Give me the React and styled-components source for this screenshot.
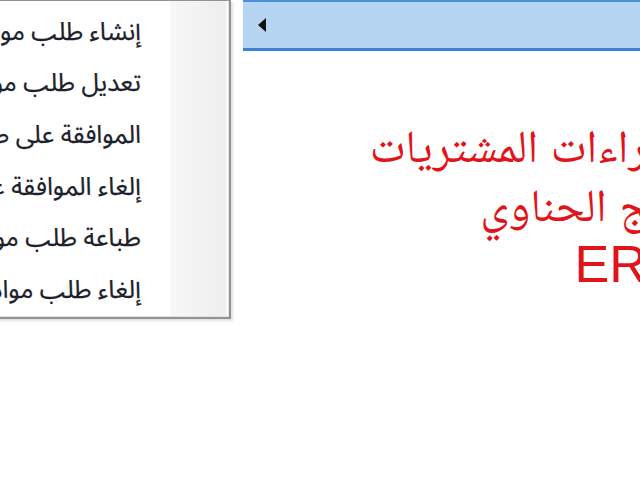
import React from "react";
import styled, { createGlobalStyle } from "styled-components";

const GlobalStyle = createGlobalStyle`
  html, body {
    margin: 0;
    padding: 0;
    background: #ffffff;
    overflow: hidden;
  }
  body {
    width: 640px;
    height: 480px;
  }
`;

const Screen = styled.div`
  display: flex;
  align-items: flex-start;
  width: 640px;
  height: 480px;
  overflow: hidden;
`;

const Menu = styled.ul`
  flex: none;
  direction: rtl;
  list-style: none;
  margin: 0 0 0 -170px;
  padding: 5px 0 1px;
  width: 401px;
  box-sizing: border-box;
  background: linear-gradient(
    to left,
    #ffffff 0,
    #ffffff 2px,
    #eeeeee 3px,
    #f7f7f7 58px,
    #ffffff 60px
  );
  border: 2px solid #939393;
  border-top-width: 1px;
  box-shadow: inset -1px -1px 0 #e2e2e2, 2px 2px 2px rgba(0, 0, 0, 0.12);
`;

const MenuItem = styled.li`
  height: 51.6px;
  display: flex;
  align-items: center;
  padding-right: 88px;
  font-family: "Noto Sans Arabic", "DejaVu Sans", sans-serif;
  font-size: 25px;
  color: #1c212c;
  -webkit-text-stroke: 0.25px #1c212c;
  white-space: nowrap;
`;

const Main = styled.div`
  flex: none;
  margin-left: 12px;
  width: 770px;
  display: flex;
  flex-direction: column;
`;

const TabBar = styled.div`
  height: 46px;
  display: flex;
  align-items: center;
  padding-left: 15px;
  background: #b6d5f2;
  border-top: 2px solid #4a8fd8;
  border-bottom: 3px solid #3b84d4;
`;

const Arrow = styled.span`
  width: 0;
  height: 0;
  border-top: 7px solid transparent;
  border-bottom: 7px solid transparent;
  border-right: 8px solid #111111;
  margin-top: -1px;
`;

const Title = styled.div`
  direction: rtl;
  margin-top: 66px;
  text-align: center;
  font-family: "Liberation Sans", "Noto Naskh Arabic", "Noto Sans Arabic",
    "DejaVu Sans", sans-serif;
  color: #e2141b;
  white-space: nowrap;
`;

const TitleLine = styled.div`
  font-size: ${(p) => p.$size}px;
  line-height: 59px;
  padding-right: ${(p) => p.$shift || 0}px;
`;

const items = [
  "إنشاء طلب مواد",
  "تعديل طلب مواد",
  "الموافقة على طلب مواد",
  "إلغاء الموافقة على طلب مواد",
  "طباعة طلب مواد",
  "إلغاء طلب مواد",
];

export default function App() {
  return (
    <>
      <GlobalStyle />
      <Screen>
        <Menu>
          {items.map((item) => (
            <MenuItem key={item}>{item}</MenuItem>
          ))}
        </Menu>
        <Main>
          <TabBar>
            <Arrow />
          </TabBar>
          <Title>
            <TitleLine $size={46} $shift={199}>
              إجراءات المشتريات
            </TitleLine>
            <TitleLine $size={46} $shift={49}>
              برنامج الحناوي
            </TitleLine>
            <TitleLine $size={52}>ERP</TitleLine>
          </Title>
        </Main>
      </Screen>
    </>
  );
}
